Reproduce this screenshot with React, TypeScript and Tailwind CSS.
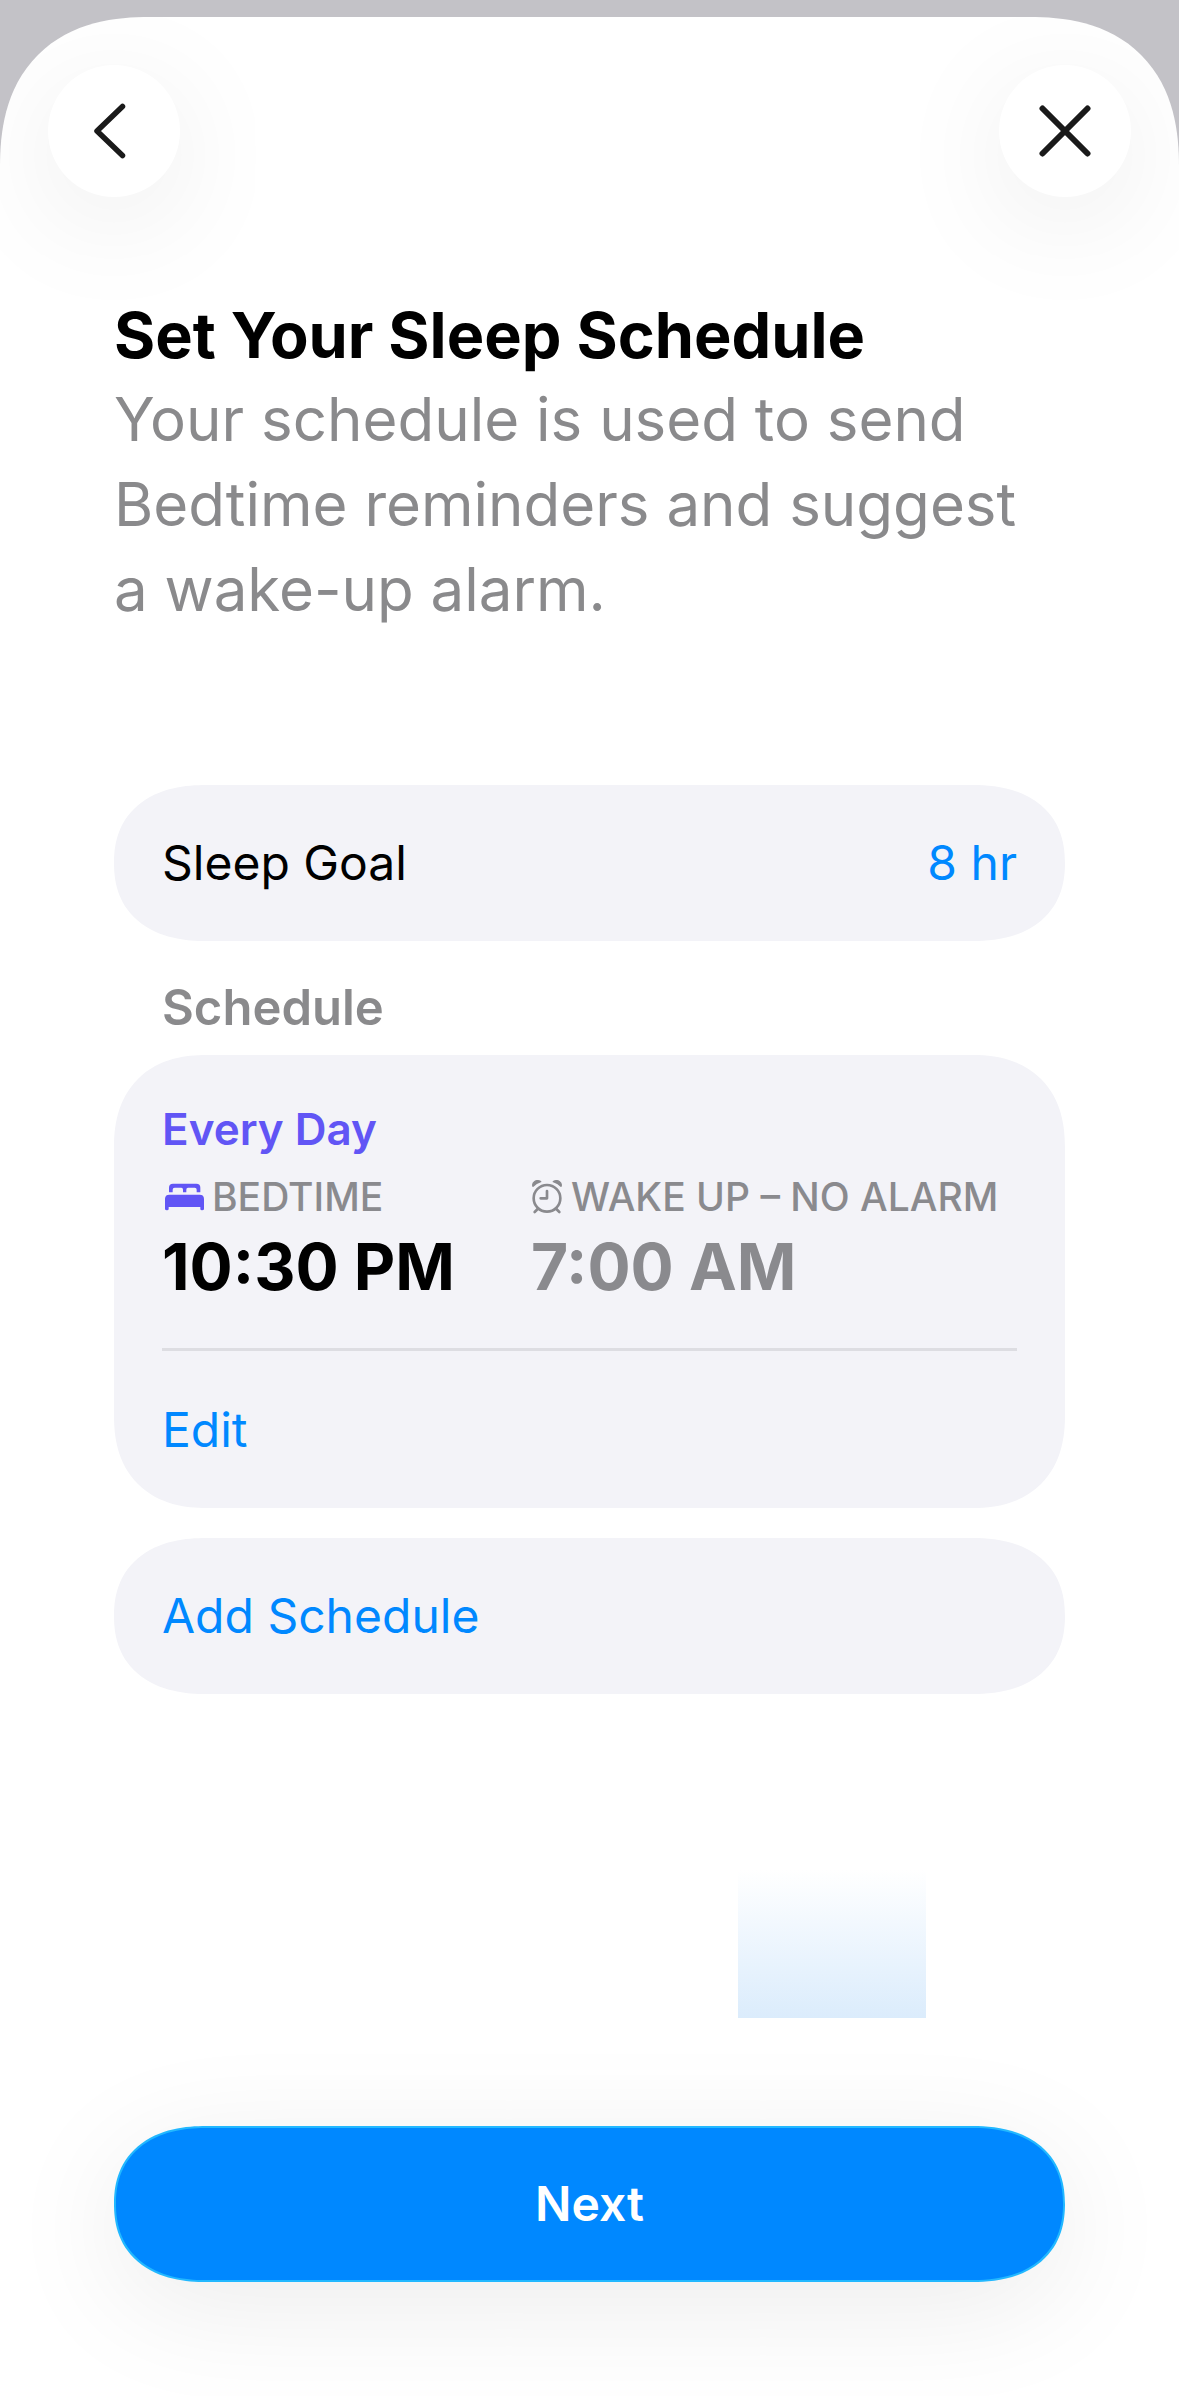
import type React from "react";

const BackIcon = () => (
  <svg viewBox="0 0 32 56" className="mr-2 h-14 w-8" fill="none" stroke="currentColor" strokeWidth="5.5" strokeLinecap="round" strokeLinejoin="round" aria-hidden="true">
    <path d="M28.5 3.5 3 28l25.5 24.5" />
  </svg>
);

const CloseIcon = () => (
  <svg viewBox="0 0 52 52" className="size-13" fill="none" stroke="currentColor" strokeWidth="6" strokeLinecap="round" aria-hidden="true">
    <path d="M3.5 3.5 48.5 48.5M48.5 3.5 3.5 48.5" />
  </svg>
);

const BedIcon = () => (
  <svg viewBox="-9 0 126 80" className="h-7 w-[42px] text-[#6155f5]" fill="currentColor" aria-hidden="true">
    <path d="M12 25V12Q12 0 24 0H94Q106 0 106 12V25Q106 26 104 26H95V18Q95 12 89 12H69Q64 12 64 18V26H54V18Q54 12 49 12H29Q23 12 23 18V26H14Q12 26 12 25Z" />
    <path d="M0 46Q0 33 13 33H104Q117 33 117 46V76Q117 80 111 80Q106 80 106 76V70H11V76Q11 80 6 80Q0 80 0 76Z" />
  </svg>
);

const AlarmIcon = () => (
  <svg viewBox="0 0 96 100" className="h-[34px] w-8" fill="none" stroke="currentColor" strokeWidth="8" strokeLinecap="round" strokeLinejoin="round" aria-hidden="true">
    <circle cx="48" cy="54" r="40" />
    <path d="M48 32V54H29M20 86 11 95M76 86 85 95" />
    <path d="M6 18C2 6 16-4 29 4 20 7 12 12 6 18ZM90 18C94 6 80-4 67 4 76 7 84 12 90 18Z" fill="currentColor" strokeWidth="4" />
  </svg>
);

const RoundButton: React.FC<{ label: string; children: React.ReactNode }> = ({ label, children }) => (
  <button
    type="button"
    aria-label={label}
    className="flex size-33 items-center justify-center rounded-full bg-white text-[#1a1a1a] shadow-[0_24px_120px_rgba(0,0,0,0.08)]"
  >
    {children}
  </button>
);

const times = [
  { label: "BEDTIME", value: "10:30 PM", icon: BedIcon, color: "text-black" },
  { label: "WAKE UP – NO ALARM", value: "7:00 AM", icon: AlarmIcon, color: "text-[#8a8a8e]" },
];

const App: React.FC = () => {
  return (
    <div className="flex min-h-screen flex-col bg-[#c3c2c7] pt-[17px] font-['Inter',sans-serif]">
      <main className="flex flex-1 flex-col overflow-hidden rounded-t-[150px] bg-white [corner-shape:superellipse(1.25)]">
        <header className="flex justify-between px-12 pt-12">
          <RoundButton label="Back">
            <BackIcon />
          </RoundButton>
          <RoundButton label="Close">
            <CloseIcon />
          </RoundButton>
        </header>

        <div className="flex flex-1 flex-col px-[114px] pt-24 pb-[114px]">
          <h1 className="text-[63px] leading-[84px] font-bold text-black">Set Your Sleep Schedule</h1>
          <p className="text-[60px] leading-[85px] text-[#8a8a8c]">
            Your schedule is used to send Bedtime reminders and suggest a wake-up alarm.
          </p>

          {/* Goal */}
          <section className="mt-[153px] flex h-39 items-center justify-between rounded-[92px/78px] bg-[#f3f3f8] px-12 text-5xl [corner-shape:superellipse(1.2)]">
            <span className="text-black">Sleep Goal</span>
            <button type="button" className="text-[#0088ff]">8 hr</button>
          </section>

          {/* Schedule */}
          <h2 className="mt-8 px-12 text-[49px] leading-[70px] font-semibold text-[#8a8a8c]">Schedule</h2>
          <section className="mt-3 rounded-[92px] bg-[#f3f3f8] px-12 pt-11 [corner-shape:superellipse(1.2)]">
            <h3 className="text-[44px] leading-[60px] font-semibold text-[#6155f5]">Every Day</h3>
            <dl className="grid grid-cols-[369px_1fr] pb-12">
              {times.map((time) => (
                <div key={time.label} className="whitespace-nowrap">
                  <dt className="flex items-center gap-2 text-[39px] leading-[75px] font-medium text-[#8a8a8e]">
                    <time.icon />
                    {time.label}
                  </dt>
                  <dd className={`text-[64px] leading-[66px] font-bold ${time.color}`}>{time.value}</dd>
                </div>
              ))}
            </dl>
            <button type="button" className="block h-40 w-full border-t-3 border-[#dddde2] text-left text-5xl text-[#0088ff]">
              Edit
            </button>
          </section>

          <button
            type="button"
            className="mt-[30px] h-39 rounded-[92px/78px] bg-[#f3f3f8] px-12 text-left text-5xl text-[#0088ff] [corner-shape:superellipse(1.2)]"
          >
            Add Schedule
          </button>

          <div className="mt-auto mr-[139px] mb-27 h-37 w-47 self-end bg-linear-to-b from-white to-[#dbecfc]" />

          <button
            type="button"
            className="h-39 rounded-[92px/78px] border-2 border-[#22b8ff] bg-[#0088ff] text-5xl font-semibold text-white shadow-[0_24px_120px_rgba(0,0,0,0.08)] [corner-shape:superellipse(1.2)]"
          >
            Next
          </button>
        </div>
      </main>
    </div>
  );
};

export default App;
